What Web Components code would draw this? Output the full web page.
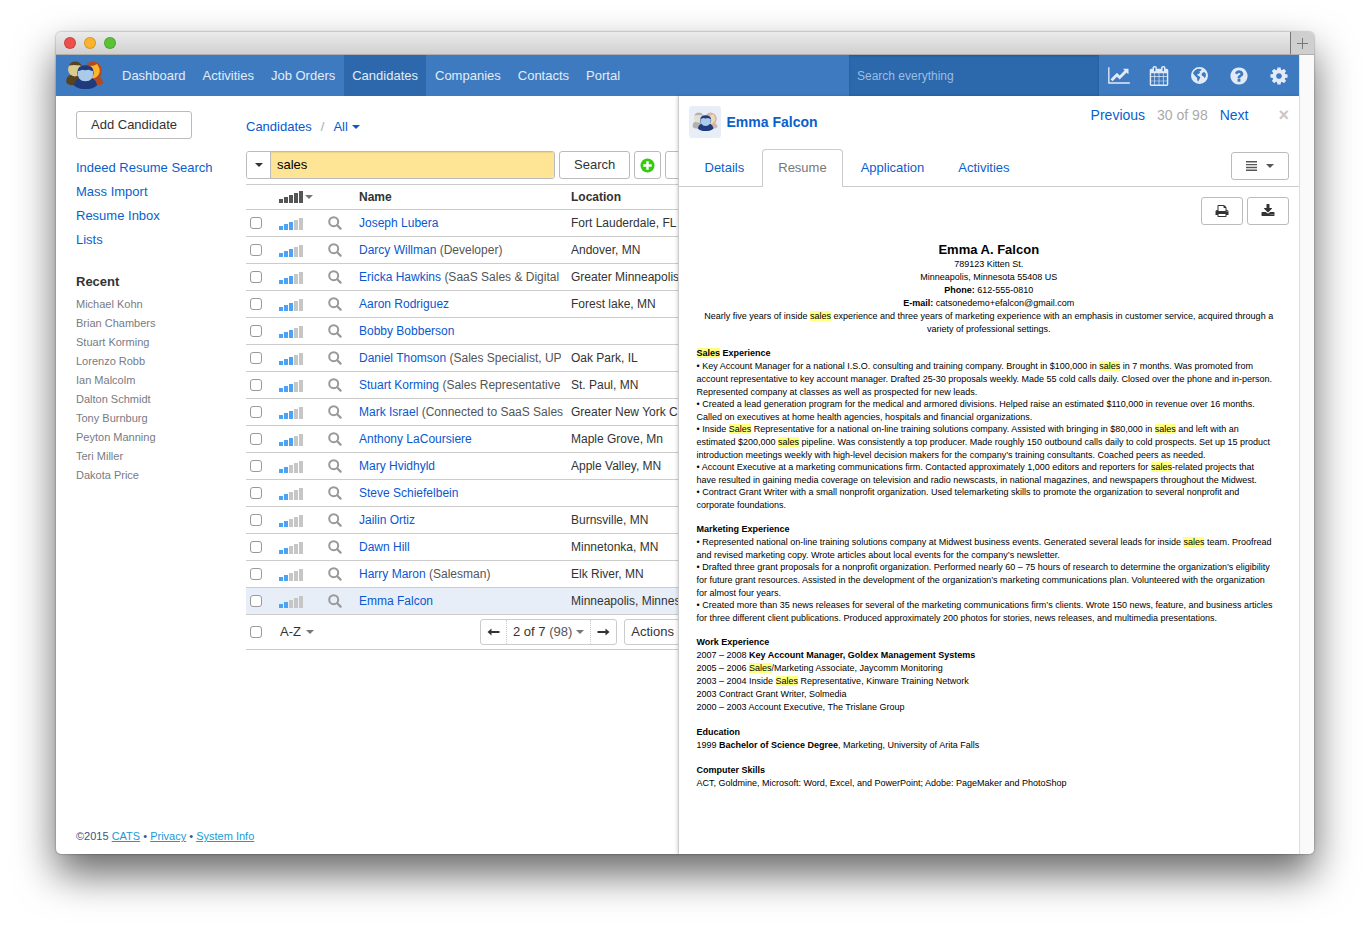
<!DOCTYPE html>
<html lang="en">
<head>
<meta charset="utf-8">
<title>CATS - Candidates</title>
<style>
  body{
    margin: 0;
    background: #fff;
    color: #333;
    font: 13px/20px "Liberation Sans", Arial, sans-serif;
  }
</style>
</head>
<body>
<app-window>
  <top-nav slot="nav"></top-nav>
  <side-bar></side-bar>
  <candidate-list></candidate-list>
  <detail-panel data-name="Emma Falcon" data-position="30 of 98">
    <resume-doc></resume-doc>
  </detail-panel>
</app-window>

<script>
// one place for the icon shapes: [viewBox, markup]
const ICONS = {
  chart: ["0 0 2048 1792", `<path d="M2048 1536v128h-2048v-1536h128v1408h1920zm-128-1248v435q0 21-19.5 29.5t-35.5-7.5l-121-121-633 633q-10 10-23 10t-23-10l-233-233-416 416-192-192 585-585q10-10 23-10t23 10l233 233 464-464-121-121q-16-16-7.5-35.5t29.5-19.5h435q14 0 23 9t9 23z"/>`],
  calendar: ["0 0 1792 1792", `<path d="M192 1664h288v-288h-288v288zm352 0h320v-288h-320v288zm-352-352h288v-320h-288v320zm352 0h320v-320h-320v320zm-352-384h288v-288h-288v288zm736 736h320v-288h-320v288zm-384-736h320v-288h-320v288zm768 736h288v-288h-288v288zm-384-352h320v-320h-320v320zm-352-864v-288q0-13-9.5-22.5t-22.5-9.5h-64q-13 0-22.5 9.5t-9.5 22.5v288q0 13 9.5 22.5t22.5 9.5h64q13 0 22.5-9.5t9.5-22.5zm736 864h288v-320h-288v320zm-384-384h320v-288h-320v288zm384 0h288v-288h-288v288zm32-480v-288q0-13-9.5-22.5t-22.5-9.5h-64q-13 0-22.5 9.5t-9.5 22.5v288q0 13 9.5 22.5t22.5 9.5h64q13 0 22.5-9.5t9.5-22.5zm384-64v1280q0 52-38 90t-90 38h-1408q-52 0-90-38t-38-90v-1280q0-52 38-90t90-38h128v-96q0-66 47-113t113-47h64q66 0 113 47t47 113v96h384v-96q0-66 47-113t113-47h64q66 0 113 47t47 113v96h128q52 0 90 38t38 90z"/>`],
  globe: ["0 0 18 18", `<path fill-rule="evenodd" d="M9 0a9 9 0 1 0 0 18a9 9 0 1 0 0-18zM8.600 1.800L11.500 2.600L10 4.200L8.800 4.700L9.600 6L8 7.300L6.500 7.800L7.200 9.200L8.600 9.400L9.800 11.200L8.800 13.200L7.400 15.600L6.600 13.600L6.400 11.400L4.600 9.800L2 6.600Q3.600 3 6.600 2.200zM12.200 6.200L14 5.200L15.600 7L15.800 9.500L14.400 12L13.400 10L11.600 9.200L11.200 7.400z"/>`],
  help: ["0 0 1792 1792", `<path d="M1024 1376v-192q0-14-9-23t-23-9h-192q-14 0-23 9t-9 23v192q0 14 9 23t23 9h192q14 0 23-9t9-23zm256-672q0-88-55.5-163t-138.5-116-170-41q-243 0-371 213-15 24 8 42l132 100q7 6 19 6 16 0 25-12 53-68 86-92 34-24 86-24 48 0 85.5 26t37.5 59q0 38-20 61t-68 45q-63 28-115.5 86.5t-52.5 125.5v36q0 14 9 23t23 9h192q14 0 23-9t9-23q0-19 21.5-49.5t54.5-49.5q32-18 49-28.5t46-35 44.5-48 28-60.5 12.5-81zm384 192q0 209-103 385.5t-279.5 279.5-385.5 103-385.5-103-279.5-279.5-103-385.5 103-385.5 279.5-279.5 385.5-103 385.5 103 279.5 279.5 103 385.5z"/>`],
  cog: ["0 0 1792 1792", `<path d="M1152 896q0-106-75-181t-181-75-181 75-75 181 75 181 181 75 181-75 75-181zm512-109v222q0 12-8 23t-20 13l-185 28q-19 54-39 91 35 50 107 138 10 12 10 25t-9 23q-27 37-99 108t-94 71q-12 0-26-9l-138-108q-44 23-91 38-16 136-29 186-7 28-36 28h-222q-14 0-24.5-8.5t-11.5-21.5l-28-184q-49-16-90-37l-141 107q-10 9-25 9-14 0-25-11-126-114-165-168-7-10-7-23 0-12 8-23 15-21 51-66.5t54-70.5q-27-50-41-99l-183-27q-13-2-21-12.5t-8-23.5v-222q0-12 8-23t19-13l186-28q14-46 39-92-40-57-107-138-10-12-10-24 0-10 9-23 26-36 98.5-107.5t94.500-71.5q13 0 26 10l138 107q44-23 91-38 16-136 29-186 7-28 36-28h222q14 0 24.5 8.5t11.5 21.5l28 184q49 16 90 37l142-107q9-9 24-9 13 0 25 10 129 119 165 170 7 8 7 22 0 12-8 23-15 21-51 66.5t-54 70.5q26 50 41 98l183 28q13 2 21 12.5t8 23.5z"/>`],
  search: ["0 0 14 14", `<circle cx="5.700" cy="5.700" r="4.500" fill="none" stroke="currentColor" stroke-width="2"/><path d="M9.200 9.200L12.600 12.600" stroke="currentColor" stroke-width="2.200" stroke-linecap="round"/>`],
  plus: ["0 0 16 16", `<circle cx="8" cy="8" r="7.500"/><path d="M8 3.500v9M3.500 8h9" stroke="#fff" stroke-width="2.600"/>`],
  print: ["0 0 1792 1792", `<path d="M448 1536h896v-256h-896v256zm0-640h896v-384h-160q-40 0-68-28t-28-68v-160h-640v640zm1152 64q0-26-19-45t-45-19-45 19-19 45 19 45 45 19 45-19 19-45zm128 0v416q0 13-9.5 22.5t-22.5 9.5h-224v160q0 40-28 68t-68 28h-960q-40 0-68-28t-28-68v-160h-224q-13 0-22.5-9.5t-9.5-22.5v-416q0-79 56.5-135.5t135.5-56.5h64v-544q0-40 28-68t68-28h672q40 0 88 20t76 48l152 152q28 28 48 76t20 88v256h64q79 0 135.5 56.5t56.5 135.5z"/>`],
  download: ["0 0 1792 1792", `<path d="M1344 1344q0-26-19-45t-45-19-45 19-19 45 19 45 45 19 45-19 19-45zm256 0q0-26-19-45t-45-19-45 19-19 45 19 45 45 19 45-19 19-45zm128-224v320q0 40-28 68t-68 28h-1472q-40 0-68-28t-28-68v-320q0-40 28-68t68-28h465l135 136q58 56 136 56t136-56l136-136h464q40 0 68 28t28 68zm-325-569q17 41-14 70l-448 448q-18 19-45 19t-45-19l-448-448q-31-29-14-70 17-39 59-39h256v-448q0-26 19-45t45-19h256q26 0 45 19t19 45v448h256q42 0 59 39z"/>`],
  caret: ["0 0 8 4", `<path d="M0 0h8l-4 4z"/>`],
  bars: ["0 0 11 10", `<path d="M0 0h11v1.400H0zM0 2.900h11v1.400H0zM0 5.800h11v1.400H0zM0 8.600h11v1.400H0z"/>`],
  left: ["0 0 12 8", `<path d="M0 4l4-3.500v2.500h8v2H4v2.500z"/>`],
  right: ["0 0 12 8", `<path d="M12 4l-4-3.500v2.500H0v2h8v2.500z"/>`],
  add: ["0 0 11 11", `<path d="M5 0h1v5h5v1H6v5H5V6H0V5h5z"/>`],
  people: ["0 0 40 30", `
    <g class="back">
      <path fill="#564420" d="M1 21q0-5 5-7h12v11H6q-5-1-5-4z"/>
      <ellipse cx="10" cy="8.500" rx="7" ry="7.500" fill="#dacb8f"/>
      <path fill="#564420" d="M3.500 5q2-4.500 7-4.500q5 0 7 5q-2.500-1.500-5-1q-4-1-9 .5z"/>
      <path fill="#b44a24" d="M22 4q2-3.500 7-3.500q9 1 9 10q0 4-2 6q3 2 3.500 6q-1 2.500-5 2.500H24z"/>
      <path fill="#fbb62c" d="M24 5q6 .5 9-2q3.500 5 2.500 9t-5 5.500l-6 1.500z"/>
    </g>
    <path fill="#1f3a7d" d="M9 25q1-7 8-8h8q7 1 8 8q-4 4-12 4T9 25z"/>
    <path fill="#1f3a7d" d="M12.500 12q0-7.500 8.500-7.500t8.500 7.500q0 2-1 4h-15q-1-2-1-4z"/>
    <path fill="#abcaea" d="M13 10.500q3-.5 4.500-1.500q3 1 7 0q1.500 1 4.500 1.500q.5 10.500-8 10.500t-8-10.500z"/>`]
};

class UiIcon extends HTMLElement{
  constructor(){
    super();
    this.attachShadow({mode:"open"});
  }
  connectedCallback(){
    const [box, shape] = ICONS[this.dataset.name];
    const w = this.dataset.w || 16;
    const h = this.dataset.h || w;
    this.shadowRoot.innerHTML = `
      <style>
        :host{ display: inline-flex; flex: none; }
        svg{ display: block; fill: currentColor; }
        :host([faded]) .back{ opacity: .35; }
      </style>
      <svg viewBox="${box}" width="${w}" height="${h}" aria-hidden="true">${shape}</svg>`;
  }
}
customElements.define('ui-icon', UiIcon);

// five little columns, the first data-value of them lit
class RatingBars extends HTMLElement{
  constructor(){
    super();
    this.attachShadow({mode:"open"});
  }
  connectedCallback(){
    const value = Number(this.dataset.value);
    const bars = [4, 6, 8, 10, 12].map((h, i) =>
      `<i class="${i < value ? "on" : ""}" style="height:${h}px"></i>`).join("");
    this.shadowRoot.innerHTML = `
      <style>
        :host{ display: inline-flex; align-items: flex-end; gap: 1px; height: 12px; --on: #4ba3f5; }
        i{ width: 4px; background: #c6c6c6; }
        .on{ background: var(--on); }
        :host([dark]){ --on: #555; }
      </style>${bars}`;
  }
}
customElements.define('rating-bars', RatingBars);

class UiButton extends HTMLElement{
  constructor(){
    super();
    this.attachShadow({mode:"open"});
    this.shadowRoot.innerHTML = `
      <style>
        :host{ display: inline-flex; flex: none; color: #333; }
        button{
          display: flex; align-items: center; justify-content: center; gap: 9px;
          box-sizing: border-box; height: var(--tall, 28px); width: 100%;
          padding: 0 var(--pad, 14px);
          font: inherit; color: inherit; white-space: nowrap;
          background: #fff; border: 1px solid var(--line, #bbb); border-radius: 3px;
        }
      </style>
      <button type="button"><slot></slot></button>`;
  }
  connectedCallback(){
    const label = this.getAttribute('data-label');
    if(label) this.shadowRoot.querySelector("button").setAttribute("aria-label", label);
  }
}
customElements.define('ui-button', UiButton);

class AppWindow extends HTMLElement{
  constructor(){
    super();
    this.attachShadow({mode:"open"});
    this.shadowRoot.innerHTML = `
      <style>
        :host{ display: block; padding: 32px 56px 80px; }
        .window{
          display: flex; flex-direction: column;
          min-height: calc(100vh - 112px);
          border-radius: 5px; overflow: hidden; background: #fff;
          box-shadow: 0 0 2px rgba(0,0,0,.5), 0 20px 40px rgba(0,0,0,.6);
        }
        .title{
          display: flex; align-items: center; gap: 8px;
          box-sizing: border-box; height: 23px; padding-left: 8px;
          background: linear-gradient(#ebebeb, #d0d0d0);
          border-bottom: 1px solid #b0aeac;
        }
        .title i{ width: 10px; height: 10px; border-radius: 50%; border: 1px solid rgba(0,0,0,.15); }
        .red{ background: #ee4f4a; }
        .amber{ background: #fab32c; }
        .green{ background: #5ac234; }
        .tab{
          display: flex; align-items: center; justify-content: center;
          align-self: stretch; width: 24px; margin-left: auto; padding: 0;
          background: #cfcfcf; border: 0; border-left: 1px solid #777; color: #777;
        }
        .view{ flex: 1; display: flex; }
        .page{ flex: 1; min-width: 0; display: flex; flex-direction: column; }
        .cols{ flex: 1; display: flex; min-width: 0; }
        .gutter{ width: 14px; background: #fafafa; border-left: 1px solid #e4e4e4; }
      </style>
      <div class="window">
        <div class="title">
          <i class="red"></i><i class="amber"></i><i class="green"></i>
          <button class="tab" type="button" aria-label="New tab"><ui-icon data-name="add" data-w="11"></ui-icon></button>
        </div>
        <div class="view">
          <div class="page">
            <slot name="nav"></slot>
            <main class="cols"><slot></slot></main>
          </div>
          <div class="gutter"></div>
        </div>
      </div>`;
  }
}
customElements.define('app-window', AppWindow);

class TopNav extends HTMLElement{
  constructor(){
    super();
    this.attachShadow({mode:"open"});
  }
  connectedCallback(){
    this.render();
  }
  render(){
    const links = ["Dashboard", "Activities", "Job Orders", "Candidates", "Companies", "Contacts", "Portal"];
    const tools = [["chart", 22, 19], ["calendar", 20, 20], ["globe", 17, 17], ["help", 20, 20], ["cog", 20, 20]];
    this.shadowRoot.innerHTML = `
      <style>
        :host{ display: flex; height: 41px; background: #3e7ac0; }
        .logo{ display: flex; align-items: center; padding: 0 10px 0 9px; }
        nav{ display: flex; gap: 1px; }
        nav a{
          display: flex; align-items: center; padding: 0 8px;
          color: #e3ecf6; text-decoration: none;
        }
        nav a.on{ background: #2e68ac; }
        input{
          box-sizing: border-box; width: 250px; margin-left: auto; padding: 0 8px;
          border: 0; border-radius: 0; background: #2b68ac; color: #fff;
          box-shadow: inset 0 1px 2px rgba(0,0,0,.15);
          font: 12px "Liberation Sans", Arial, sans-serif;
        }
        input::placeholder{ color: #9cbde2; opacity: 1; }
        button{
          display: flex; align-items: center; justify-content: center;
          width: 40px; padding: 0; border: 0; background: none; color: #e1eaf6;
        }
      </style>
      <a class="logo" href="#" aria-label="CATS"><ui-icon data-name="people" data-w="39" data-h="29"></ui-icon></a>
      <nav>${links.map(l => `<a href="#" class="${l === "Candidates" ? "on" : ""}">${l}</a>`).join("")}</nav>
      <input type="search" placeholder="Search everything" aria-label="Search everything">
      ${tools.map(([n, w, h]) => `<button type="button" aria-label="${n}"><ui-icon data-name="${n}" data-w="${w}" data-h="${h}"></ui-icon></button>`).join("")}
    `;
  }
}
customElements.define('top-nav', TopNav);

class SideBar extends HTMLElement{
  constructor(){
    super();
    this.attachShadow({mode:"open"});
  }
  connectedCallback(){
    this.render();
  }
  render(){
    const links = ["Indeed Resume Search", "Mass Import", "Resume Inbox", "Lists"];
    const recent = ["Michael Kohn", "Brian Chambers", "Stuart Korming", "Lorenzo Robb", "Ian Malcolm",
      "Dalton Schmidt", "Tony Burnburg", "Peyton Manning", "Teri Miller", "Dakota Price"];
    this.shadowRoot.innerHTML = `
      <style>
        :host{
          display: flex; flex-direction: column; flex: none;
          box-sizing: border-box; width: 190px; padding: 15px 0 8px 20px;
        }
        ui-button{ align-self: flex-start; }
        ul{ list-style: none; margin: 0; padding: 0; }
        .links{ margin-top: 17px; line-height: 24px; }
        a{ color: #0a5fce; text-decoration: none; }
        h3{ margin: 20px 0 3px; font-size: 13px; line-height: 20px; }
        .recent{ font-size: 11px; line-height: 19px; }
        .recent a{ color: #777b84; }
        footer{ margin-top: auto; font-size: 11px; white-space: nowrap; color: #44517d; }
        footer a{ color: #1a9ad6; text-decoration: underline; }
      </style>
      <ui-button>Add Candidate</ui-button>
      <ul class="links">${links.map(l => `<li><a href="#">${l}</a></li>`).join("")}</ul>
      <h3>Recent</h3>
      <ul class="recent">${recent.map(l => `<li><a href="#">${l}</a></li>`).join("")}</ul>
      <footer>©2015 <a href="#">CATS</a> • <a href="#">Privacy</a> • <a href="#">System Info</a></footer>
    `;
  }
}
customElements.define('side-bar', SideBar);

// name, note, location, rating
const CANDIDATES = [
  ["Joseph Lubera", "", "Fort Lauderdale, FL", 3],
  ["Darcy Willman", "(Developer)", "Andover, MN", 3],
  ["Ericka Hawkins", "(SaaS Sales &amp; Digital", "Greater Minneapolis", 3],
  ["Aaron Rodriguez", "", "Forest lake, MN", 3],
  ["Bobby Bobberson", "", "", 3],
  ["Daniel Thomson", "(Sales Specialist, UP", "Oak Park, IL", 3],
  ["Stuart Korming", "(Sales Representative", "St. Paul, MN", 3],
  ["Mark Israel", "(Connected to SaaS Sales", "Greater New York C", 3],
  ["Anthony LaCoursiere", "", "Maple Grove, Mn", 3],
  ["Mary Hvidhyld", "", "Apple Valley, MN", 2],
  ["Steve Schiefelbein", "", "", 2],
  ["Jailin Ortiz", "", "Burnsville, MN", 2],
  ["Dawn Hill", "", "Minnetonka, MN", 2],
  ["Harry Maron", "(Salesman)", "Elk River, MN", 2],
  ["Emma Falcon", "", "Minneapolis, Minnes", 2]
];

class CandidateList extends HTMLElement{
  constructor(){
    super();
    this.attachShadow({mode:"open"});
  }
  connectedCallback(){
    this.render();
  }
  row([name, note, place, rating]){
    return `
      <tr class="${name === "Emma Falcon" ? "current" : ""}">
        <td><input type="checkbox" aria-label="Select ${name}"></td>
        <td><rating-bars data-value="${rating}"></rating-bars></td>
        <td><button class="peek" type="button" aria-label="Preview ${name}"><ui-icon data-name="search" data-w="14"></ui-icon></button></td>
        <td><div class="name"><a href="#">${name}</a> <span>${note}</span></div></td>
        <td>${place}</td>
      </tr>`;
  }
  render(){
    this.shadowRoot.innerHTML = `
      <style>
        :host{ display: block; flex: 1; min-width: 0; overflow: hidden; padding-top: 21px; }
        a{ color: #0a57d0; text-decoration: none; }
        .crumbs{ display: flex; align-items: center; gap: 9px; }
        .crumbs i{ color: #aaa; font-style: normal; }
        .menu{
          display: flex; align-items: center; gap: 4px;
          padding: 0; border: 0; background: none; font: inherit; color: #0a57d0;
        }
        .tools{ display: flex; gap: 4px; margin-top: 14px; }
        .box{
          display: flex; box-sizing: border-box; width: 309px; height: 28px; flex: none;
          border: 1px solid #bbb; border-radius: 3px; overflow: hidden;
        }
        .box button{
          display: flex; align-items: center; justify-content: center;
          width: 24px; flex: none; padding: 0; border: 0; border-right: 1px solid #bbb; background: #fff; color: #333;
        }
        .box input{
          flex: 1; min-width: 0; padding: 0 6px; border: 0; background: #fee596; color: #000; font: inherit;
          box-shadow: inset 0 1px 1px rgba(0,0,0,.08);
        }
        .green{ color: #36cc0c; --pad: 5px; }
        .more{ width: 60px; }
        table{
          width: 520px; margin-top: 5px; table-layout: fixed; font-size: 12px;
          border-collapse: separate; border-spacing: 0; border-top: 1px solid #ccc;
        }
        th, td{
          box-sizing: border-box; height: 27px; padding: 0; text-align: left; white-space: nowrap;
          border-bottom: 1px solid #ccc; overflow: hidden; vertical-align: middle;
        }
        th{ height: 25px; }
        th .menu{ gap: 2px; color: #777; }
        td:first-child{ padding-left: 4px; }
        td rating-bars{ vertical-align: middle; }
        input[type=checkbox]{
          display: block; appearance: none; box-sizing: border-box; width: 12px; height: 12px; margin: 0;
          border: 1px solid #999; border-radius: 3px; background: #fff;
        }
        .peek{ display: flex; padding: 0; border: 0; background: none; color: #999; }
        .name{ width: 204px; overflow: hidden; color: #555; }
        .current td{ background: #e8eef8; }
        .foot{
          display: flex; align-items: center; box-sizing: border-box; height: 35px; width: 520px;
          padding-left: 4px; border-bottom: 1px solid #ccc;
        }
        .sort{ display: flex; align-items: center; gap: 5px; width: 200px; margin-left: 18px; color: #777; }
        select{ appearance: none; padding: 0; border: 0; background: none; font: inherit; color: #333; }
        .pager{
          display: flex; box-sizing: border-box; height: 26px; margin-right: 7px;
          border: 1px solid #ccc; border-radius: 3px;
        }
        .pager button{
          display: flex; align-items: center; justify-content: center; gap: 4px;
          padding: 0 6px; border: 0; background: none; font: inherit; color: #333; white-space: nowrap;
        }
        .pager button + button{ border-left: 1px dotted #ccc; }
        .pager ui-icon[data-name=caret]{ color: #777; }
        .pager i{ color: #555; font-style: normal; }
        .foot ui-button{ --pad: 6px; --tall: 26px; --line: #ccc; }
      </style>
      <div class="crumbs">
        <a href="#">Candidates</a><i>/</i>
        <button class="menu" type="button" aria-haspopup="true">All <ui-icon data-name="caret" data-w="8" data-h="4"></ui-icon></button>
      </div>
      <div class="tools">
        <div class="box">
          <button type="button" aria-label="Search options"><ui-icon data-name="caret" data-w="8" data-h="4"></ui-icon></button>
          <input type="text" value="sales" aria-label="Search candidates">
        </div>
        <ui-button>Search</ui-button>
        <ui-button class="green" data-label="Add filter"><ui-icon data-name="plus" data-w="15"></ui-icon></ui-button>
        <ui-button class="more" data-label="More"></ui-button>
      </div>
      <table>
        <colgroup><col style="width:33px"><col style="width:49px"><col style="width:31px"><col style="width:212px"><col></colgroup>
        <thead>
          <tr>
            <th></th>
            <th><button class="menu" type="button" aria-label="Rating"><rating-bars data-value="5" dark></rating-bars><ui-icon data-name="caret" data-w="8" data-h="4"></ui-icon></button></th>
            <th></th>
            <th>Name</th>
            <th>Location</th>
          </tr>
        </thead>
        <tbody>${CANDIDATES.map(c => this.row(c)).join("")}</tbody>
      </table>
      <div class="foot">
        <input type="checkbox" aria-label="Select all">
        <label class="sort"><select aria-label="Sort order"><option>A-Z</option></select><ui-icon data-name="caret" data-w="8" data-h="4"></ui-icon></label>
        <div class="pager">
          <button type="button" aria-label="Previous page"><ui-icon data-name="left" data-w="13" data-h="8"></ui-icon></button>
          <button type="button"><span>2 of 7 <i>(98)</i></span><ui-icon data-name="caret" data-w="8" data-h="4"></ui-icon></button>
          <button type="button" aria-label="Next page"><ui-icon data-name="right" data-w="13" data-h="8"></ui-icon></button>
        </div>
        <ui-button>Actions</ui-button>
      </div>
    `;
  }
}
customElements.define('candidate-list', CandidateList);

class DetailPanel extends HTMLElement{
  constructor(){
    super();
    this.attachShadow({mode:"open"});
  }
  connectedCallback(){
    this.render();
  }
  render(){
    this.shadowRoot.innerHTML = `
      <style>
        :host{
          display: block; box-sizing: border-box; flex: 0 0 50%; z-index: 1;
          background: #fff; border-left: 1px solid #ccc; box-shadow: -1px 0 3px rgba(0,0,0,.15);
        }
        a{ color: #0a5fce; text-decoration: none; }
        header{ display: flex; align-items: flex-start; padding: 10px 10px 0; }
        .avatar{
          display: flex; align-items: center; justify-content: center;
          width: 32px; height: 32px; border-radius: 3px; background: #e8eef8;
        }
        h1{ margin: 0 0 0 6px; font-size: 14px; line-height: 32px; color: #0a5fce; }
        .paging{ display: flex; gap: 12px; margin-left: auto; font-size: 14px; line-height: 18px; color: #aaa; }
        .close{ margin-left: 18px; padding: 0; border: 0; background: none; font: bold 18px/18px "Liberation Sans", Arial, sans-serif; color: #c8c8c8; }
        .bar{ display: flex; align-items: flex-start; margin-top: 11px; padding: 0 10px; border-bottom: 1px solid #ccc; }
        nav{ display: flex; gap: 2px; margin-bottom: -1px; }
        nav a{ padding: 8px 15px 9px; border: 1px solid transparent; border-bottom: 0; border-radius: 4px 4px 0 0; }
        nav a.on{ color: #777; background: #fff; border-color: #ccc; }
        .bar ui-button{ margin: 3px 0 0 auto; color: #555; }
        .docs{ display: flex; justify-content: flex-end; gap: 4px; padding: 10px 10px 0; --pad: 13px; }
      </style>
      <header>
        <div class="avatar"><ui-icon data-name="people" data-w="26" data-h="20" faded></ui-icon></div>
        <h1>${this.getAttribute('data-name')}</h1>
        <div class="paging">
          <a href="#">Previous</a><span>${this.getAttribute('data-position')}</span><a href="#">Next</a>
          <button class="close" type="button">×</button>
        </div>
      </header>
      <div class="bar">
        <nav><a href="#">Details</a><a href="#" class="on">Resume</a><a href="#">Application</a><a href="#">Activities</a></nav>
        <ui-button data-label="Menu"><ui-icon data-name="bars" data-w="11" data-h="10"></ui-icon><ui-icon data-name="caret" data-w="8" data-h="4"></ui-icon></ui-button>
      </div>
      <div class="docs">
        <ui-button data-label="Print"><ui-icon data-name="print" data-w="14"></ui-icon></ui-button>
        <ui-button data-label="Download"><ui-icon data-name="download" data-w="14"></ui-icon></ui-button>
      </div>
      <slot></slot>
    `;
  }
}
customElements.define('detail-panel', DetailPanel);

class ResumeDoc extends HTMLElement{
  constructor(){
    super();
    this.attachShadow({mode:"open"});
    this.shadowRoot.innerHTML = `
      <style>
        :host{ display: block; padding: 17px 8px 20px 18px; font-size: 9px; line-height: 13px; color: #000; }
        h2{ margin: 0; font-size: 13px; line-height: 16px; }
        h3{ margin: 0; font-size: 9px; line-height: 13px; }
        header{ margin: 0 10px 11px 0; text-align: center; }
        section{ margin-bottom: 12px; }
        ul{ list-style: none; margin: 0; padding: 0; }
        li{ margin-bottom: -1px; }
        li::before{ content: "• "; }
        p{ margin: 0; }
        mark{ background: #ffff80; color: inherit; }
      </style>
      <header>
        <h2>Emma A. Falcon</h2>
        <p>789123 Kitten St.<br>Minneapolis, Minnesota 55408 US<br>
        <b>Phone:</b> 612-555-0810<br>
        <b>E-mail:</b> catsonedemo+efalcon@gmail.com<br>
        Nearly five years of inside <mark>sales</mark> experience and three years of marketing experience with an emphasis in customer service, acquired through a<br>
        variety of professional settings.</p>
      </header>
      <section>
        <h3><mark>Sales</mark> Experience</h3>
        <ul>
          <li>Key Account Manager for a national I.S.O. consulting and training company. Brought in $100,000 in <mark>sales</mark> in 7 months. Was promoted from<br>
          account representative to key account manager. Drafted 25-30 proposals weekly. Made 55 cold calls daily. Closed over the phone and in-person.<br>
          Represented company at classes as well as prospected for new leads.</li>
          <li>Created a lead generation program for the medical and armored divisions. Helped raise an estimated $110,000 in revenue over 16 months.<br>
          Called on executives at home health agencies, hospitals and financial organizations.</li>
          <li>Inside <mark>Sales</mark> Representative for a national on-line training solutions company. Assisted with bringing in $80,000 in <mark>sales</mark> and left with an<br>
          estimated $200,000 <mark>sales</mark> pipeline. Was consistently a top producer. Made roughly 150 outbound calls daily to cold prospects. Set up 15 product<br>
          introduction meetings weekly with high-level decision makers for the company’s training consultants. Coached peers as needed.</li>
          <li>Account Executive at a marketing communications firm. Contacted approximately 1,000 editors and reporters for <mark>sales</mark>-related projects that<br>
          have resulted in gaining media coverage on television and radio newscasts, in national magazines, and newspapers throughout the Midwest.</li>
          <li>Contract Grant Writer with a small nonprofit organization. Used telemarketing skills to promote the organization to several nonprofit and<br>
          corporate foundations.</li>
        </ul>
      </section>
      <section>
        <h3>Marketing Experience</h3>
        <ul>
          <li>Represented national on-line training solutions company at Midwest business events. Generated several leads for inside <mark>sales</mark> team. Proofread<br>
          and revised marketing copy. Wrote articles about local events for the company’s newsletter.</li>
          <li>Drafted three grant proposals for a nonprofit organization. Performed nearly 60 – 75 hours of research to determine the organization’s eligibility<br>
          for future grant resources. Assisted in the development of the organization’s marketing communications plan. Volunteered with the organization<br>
          for almost four years.</li>
          <li>Created more than 35 news releases for several of the marketing communications firm’s clients. Wrote 150 news, feature, and business articles<br>
          for three different client publications. Produced approximately 200 photos for stories, news releases, and multimedia presentations.</li>
        </ul>
      </section>
      <section>
        <h3>Work Experience</h3>
        <p>2007 – 2008 <b>Key Account Manager, Goldex Management Systems</b><br>
        2005 – 2006 <mark>Sales</mark>/Marketing Associate, Jaycomm Monitoring<br>
        2003 – 2004 Inside <mark>Sales</mark> Representative, Kinware Training Network<br>
        2003 Contract Grant Writer, Solmedia<br>
        2000 – 2003 Account Executive, The Trislane Group</p>
      </section>
      <section>
        <h3>Education</h3>
        <p>1999 <b>Bachelor of Science Degree</b>, Marketing, University of Arita Falls</p>
      </section>
      <section>
        <h3>Computer Skills</h3>
        <p>ACT, Goldmine, Microsoft: Word, Excel, and PowerPoint; Adobe: PageMaker and PhotoShop</p>
      </section>`;
  }
}
customElements.define('resume-doc', ResumeDoc);
</script>
</body>
</html>
